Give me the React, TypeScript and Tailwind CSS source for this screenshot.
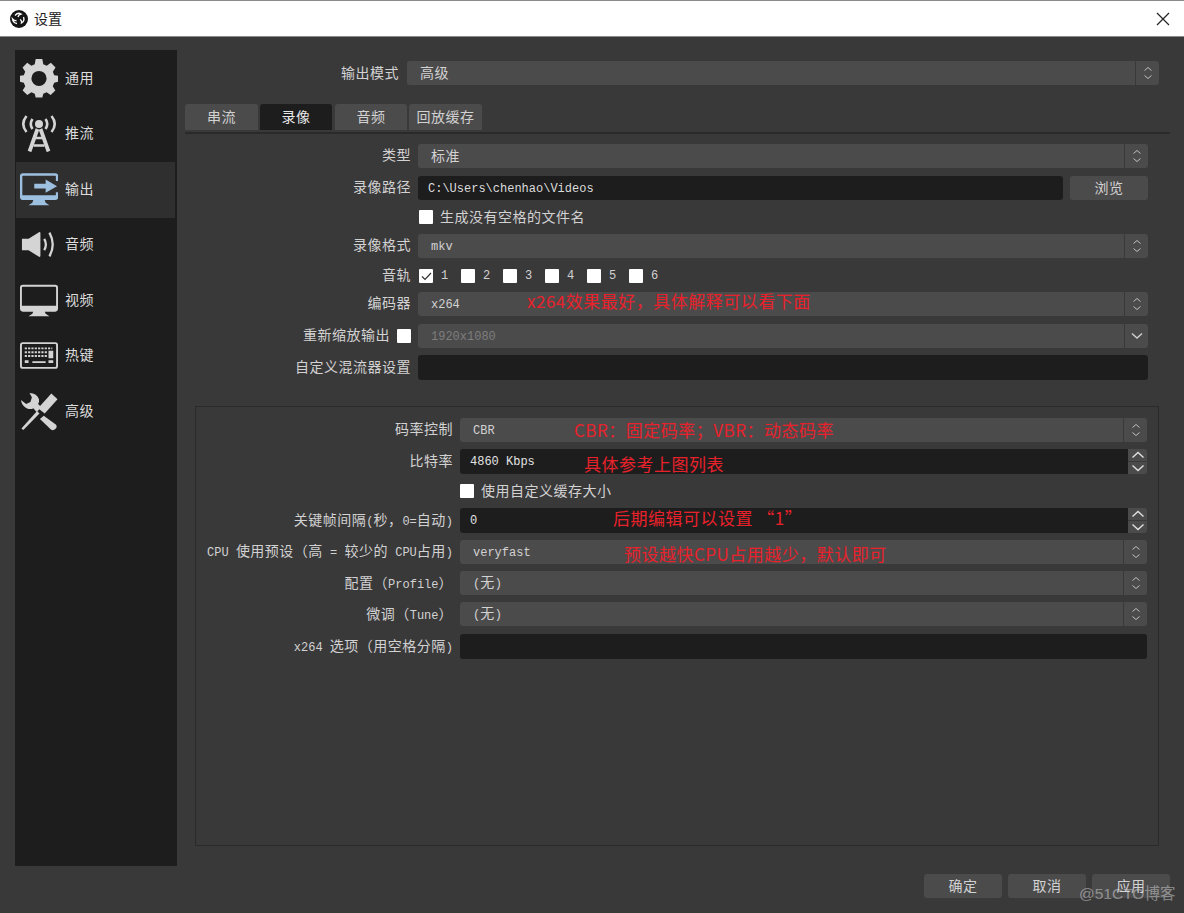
import React from "react";

const mono = "font-['Liberation_Mono',monospace] text-[12px] tracking-normal";

// latin bits of a label are monospaced and smaller than the chinese
const Mixed: React.FC<{ text: string; className?: string }> = ({ text, className }) => (
  <span className={className}>
    {text.split(/([\x20-\x7e]+)/).map((part, i) =>
      /^[\x20-\x7e]+$/.test(part) ? (
        <span key={i} className={mono + " whitespace-pre"}>
          {part}
        </span>
      ) : (
        <span key={i}>{part}</span>
      )
    )}
  </span>
);

const Chevrons: React.FC = () => (
  <svg width="10" height="16" viewBox="0 0 10 16" fill="none" stroke="#c0c0c0" strokeWidth="1">
    <path d="M1.500 5.500 5 2.500l3.500 3M1.500 10.500l3.500 3 3.500-3" />
  </svg>
);

const Select: React.FC<{ value?: string; single?: boolean; dim?: boolean }> = ({ value, single, dim }) => (
  <div className="relative flex h-[24px] flex-1 rounded-[3px] bg-[#4c4b4c]">
    <div className={"flex flex-1 items-center pb-[2px] pl-[13px] " + (dim ? "text-[#7d7d7d]" : "text-[#d2d2d2]")}>
      {value && <Mixed text={value} />}
    </div>
    <div className="ml-[1px] flex w-[24px] items-center justify-center rounded-r-[3px] border-l border-[#3a393a]">
      {single ? (
        <svg width="12" height="8" viewBox="0 0 12 8" fill="none" stroke="#d0d0d0" strokeWidth="1.400">
          <path d="M1 1.500 6 6l5-4.500" />
        </svg>
      ) : (
        <Chevrons />
      )}
    </div>
  </div>
);

const Spin: React.FC<{ value: string }> = ({ value }) => (
  <div className="flex h-[25px] flex-1 rounded-[3px] bg-[#1d1d1d]">
    <div className={"flex flex-1 items-center pl-[10px] text-[#e2e2e2] " + mono}>{value}</div>
    <div className="flex w-[19px] flex-col gap-[1px] bg-[#3a393a]">
      <div className="flex flex-1 items-center justify-center rounded-tr-[3px] bg-[#4c4b4c]">
        <svg width="14" height="8" viewBox="0 0 14 8" fill="none" stroke="#e0e0e0" strokeWidth="1.400">
          <path d="M1.500 6.500 7 1.500l5.500 5" />
        </svg>
      </div>
      <div className="flex flex-1 items-center justify-center rounded-br-[3px] bg-[#4c4b4c]">
        <svg width="14" height="8" viewBox="0 0 14 8" fill="none" stroke="#e0e0e0" strokeWidth="1.400">
          <path d="M1.500 1.500 7 6.500l5.500-5" />
        </svg>
      </div>
    </div>
  </div>
);

const Check: React.FC<{ checked?: boolean }> = ({ checked }) => (
  <div className="flex h-[14px] w-[14px] shrink-0 items-center justify-center rounded-[1px] bg-white">
    {checked && (
      <svg width="11" height="9" viewBox="0 0 11 9" fill="none" stroke="#333" strokeWidth="1.200">
        <path d="M1 4.500 4 7.500 10 1" />
      </svg>
    )}
  </div>
);

const Note: React.FC<{ left: number; top: number; text: string }> = ({ left, top, text }) => (
  <span
    className="pointer-events-none absolute whitespace-pre font-['Noto_Sans_CJK_SC',sans-serif] text-[17px] leading-[24px] tracking-[0.5px] text-[#e9212b]"
    style={{ left, top }}
  >
    {text}
  </span>
);

const Row: React.FC<{ label: React.ReactNode; labelWidth: string; children: React.ReactNode; className?: string }> = ({
  label,
  labelWidth,
  children,
  className,
}) => (
  <div className={"flex items-center gap-[7px] " + (className ?? "")}>
    <div className={"flex shrink-0 items-center justify-end whitespace-pre pb-[3px] text-[#d2d2d2] " + labelWidth}>
      {label}
    </div>
    {children}
  </div>
);

const GearIcon = () => (
  <svg width="38" height="40" viewBox="0 0 40 42" fill="#d4d4d4">
    <path
      fillRule="evenodd"
      d="M16.500 1h7l1 5.500 3.600 1.500 4.400-3 4.900 4.900-2.800 4.500L36 18l4 .5v6.500l-4 1-1.500 3.600 2.700 4.500-4.900 4.900-4.300-3-3.500 1.500-1 4h-7l-1-4-3.500-1.500-4.300 3-4.900-4.900 2.700-4.500L4 26l-4-1v-6.500l4-.5 1.500-3.600L2.700 9.900l4.900-4.900 4.400 3 3.500-1.500zM20 13.500a8 8 0 1 0 0 16 8 8 0 0 0 0-16z"
    />
  </svg>
);

const TowerIcon = () => (
  <svg width="38" height="37" viewBox="0 0 38 37" fill="none" stroke="#d4d4d4">
    <circle cx="19" cy="9" r="4" fill="#d4d4d4" stroke="none" />
    <path strokeWidth="2.600" d="M12.500 4q-3.500 5 0 10M25.500 4q3.500 5 0 10M6.500 1q-6.500 8 0 16M31.500 1q6.500 8 0 16" />
    <path strokeWidth="3.800" d="M17.500 14 9.500 36.500M20.500 14 28.500 36.500" />
    <path strokeWidth="2.600" d="M13.500 30.500h11M15.500 23h7" />
  </svg>
);

const OutputIcon = () => (
  <svg width="38" height="33" viewBox="0 0 40 34" fill="none" stroke="#9dc0e0">
    <path strokeWidth="2.500" d="M39 8V3q0-1.800-1.800-1.800H3Q1.200 1.200 1.200 3v22q0 1.800 1.800 1.800h34.200q1.800 0 1.800-1.800v-5" />
    <path fill="#9dc0e0" stroke="none" d="M1 23h38v2.500q0 2.500-2.500 2.500h-33Q1 28 1 25.500zM14 28h12l1 3 4 2.500H9l4-2.500z" />
    <path fill="#9dc0e0" stroke="none" d="M15 11h12V6.500L39 13.500 27 20.500V16H15z" />
  </svg>
);

const SpeakerIcon = () => (
  <svg width="36" height="27" viewBox="0 0 38 28" fill="#d4d4d4">
    <path d="M1 8h7L19 1q1.500-.5 1.500 1v24q0 1.500-1.500 1L8 20H1z" />
    <path fill="none" stroke="#d4d4d4" strokeWidth="2.400" d="M24.500 8q3.500 6 0 12M30 1.500q7 12.500 0 25" />
  </svg>
);

const MonitorIcon = () => (
  <svg width="38" height="33" viewBox="0 0 40 33" fill="none" stroke="#d4d4d4">
    <rect x="1" y="1" width="38" height="26" rx="2" strokeWidth="2" />
    <path fill="#d4d4d4" stroke="none" d="M1 22h38v4q0 2-2 2H3q-2 0-2-2zM14 28h12l1 2.500 4 2.500H9l4-2.500z" />
  </svg>
);

const KeyboardIcon = () => (
  <svg width="38" height="27" viewBox="0 0 40 28" fill="none">
    <rect x="1" y="1" width="38" height="26" rx="2" stroke="#d4d4d4" strokeWidth="2" />
    <path stroke="#d4d4d4" strokeWidth="2" strokeDasharray="2.300 1.200" d="M5 6.500h29M5 10.500h24M5 14.500h24" />
    <path fill="#d4d4d4" d="M30 9h5v8h-5zM5 19h4v3H5zM13 20h14v2H13zM30 19h5v3h-5z" />
  </svg>
);

const ToolsIcon = () => (
  <svg width="38" height="39" viewBox="0 0 40 40" fill="#d4d4d4">
    <path d="M33 1 39.500 7 26 22 19 16.500z" />
    <path d="M18 19.500 20.500 22 3.500 39.500 1.500 38z" />
    <path d="M25 24.500 38 34q1.500 2.500-.8 4.500t-4.700.5L21 28z" />
    <path d="M10 .5Q18 1 20 7q.5 3-1 5l3.500 3.500-5 5L14 16.500q-2 1.500-6 .5Q2 15 1 8l5.500 4L11 10l1.500-5z" />
  </svg>
);

const ObsLogo = () => (
  <svg width="18" height="18" viewBox="0 0 18 18">
    <circle cx="9" cy="9" r="9" fill="#151515" />
    <g fill="none" stroke="#fff" strokeWidth="1.300">
      <path d="M5 5.500q3-3.500 6-1.500-2.500.5-3 3" />
      <path d="M13.500 7q1.500 4-2 6 .5-2.500-1.500-3.500" />
      <path d="M7 13.500q-4-.5-4.500-4.500 1.500 2 4 1.500" />
    </g>
  </svg>
);

const navItems = [
  { label: "通用", icon: <GearIcon />, active: false },
  { label: "推流", icon: <TowerIcon />, active: false },
  { label: "输出", icon: <OutputIcon />, active: true },
  { label: "音频", icon: <SpeakerIcon />, active: false },
  { label: "视频", icon: <MonitorIcon />, active: false },
  { label: "热键", icon: <KeyboardIcon />, active: false },
  { label: "高级", icon: <ToolsIcon />, active: false },
];

const tabs = [
  { label: "串流", cls: "w-[73px] bg-[#4c4b4c]" },
  { label: "录像", cls: "w-[72px] bg-[#1d1d1d] text-[#e8e8e8]" },
  { label: "音频", cls: "ml-[1px] w-[72px] bg-[#4c4b4c]" },
  { label: "回放缓存", cls: "w-[73px] bg-[#4c4b4c]" },
];

const App: React.FC = () => {
  return (
    <div className="relative flex h-[913px] w-[1184px] flex-col overflow-hidden bg-[#3a393a] font-['Noto_Sans_CJK_SC',sans-serif] text-[14px] tracking-[0.5px] text-[#d2d2d2]">
      <div className="flex h-[37px] shrink-0 items-center border-y border-[#8a8a8a] bg-white pl-[10px] pr-[14px] text-[#222]">
        <ObsLogo />
        <span className="ml-[6px] pb-[1px] text-[14px] tracking-normal">设置</span>
        <svg className="ml-auto" width="14" height="14" viewBox="0 0 14 14" stroke="#222" strokeWidth="1.200">
          <path d="M1 1l12 12M13 1 1 13" />
        </svg>
      </div>

      <div className="flex flex-1 pl-[15px] pr-[14px] pt-[13px]">
        <div className="flex h-[816px] w-[162px] shrink-0 flex-col bg-[#1d1d1d] pl-[1px] pr-[2px] pt-[1px]">
          {navItems.map((item) => (
            <div key={item.label} className={"flex h-[55.500px] items-center " + (item.active ? "bg-[#2f2f2f]" : "")}>
              <div className="flex w-[49px] shrink-0 justify-center pb-[1px] pr-[3px]">{item.icon}</div>
              <span className="pb-[3px] text-[#dcdcdc]">{item.label}</span>
            </div>
          ))}
        </div>

        <div className="ml-[8px] flex flex-1 flex-col">
          <div className="mt-[11px] flex items-center pr-[11px]">
            <div className="flex flex-1 items-center gap-[8px]">
              <div className="w-[214px] pb-[2px] text-right">输出模式</div>
              <Select value="高级" />
            </div>
          </div>

          <div className="mt-[19px] flex gap-[2px] border-b-2 border-[#2a2a2a] pb-[2px]">
            {tabs.map((tab) => (
              <div key={tab.label} className={"flex h-[26px] items-center justify-center rounded-t-[3px] pb-[2px] " + tab.cls}>
                {tab.label}
              </div>
            ))}
          </div>

          <div className="mt-[10px] flex flex-col pr-[22px]">
            <Row label="类型" labelWidth="w-[226px]" className="h-[24px]">
              <Select value="标准" />
            </Row>
            <Row label="录像路径" labelWidth="w-[226px]" className="mt-[8px] h-[24px]">
              <div className={"flex h-[24px] flex-1 items-center rounded-[3px] bg-[#1d1d1d] pl-[10px] pt-[1px] text-[#dcdcdc] " + mono}>
                C:\Users\chenhao\Videos
              </div>
              <div className="flex h-[24px] w-[78px] items-center justify-center rounded-[3px] bg-[#4c4b4c] pb-[2px]">浏览</div>
            </Row>
            <Row label="" labelWidth="w-[226px]" className="mt-[5px] h-[24px]">
              <div className="ml-[1px]">
                <Check />
              </div>
              <span className="pb-[2px]">生成没有空格的文件名</span>
            </Row>
            <Row label="录像格式" labelWidth="w-[226px]" className="mt-[5px] h-[24px]">
              <Select value="mkv" />
            </Row>
            <Row label="音轨" labelWidth="w-[226px]" className="mt-[6px] h-[24px]">
              <div className="ml-[1px] flex">
                {["1", "2", "3", "4", "5", "6"].map((n, i) => (
                  <div key={n} className="flex w-[42px] items-center gap-[8px]">
                    <Check checked={i === 0} />
                    <span className={mono}>{n}</span>
                  </div>
                ))}
              </div>
            </Row>
            <Row label="编码器" labelWidth="w-[226px]" className="mt-[4px] h-[24px]">
              <div className="relative flex flex-1">
                <Select value="x264" />
                <Note left={109} top={-3} text="x264效果最好，具体解释可以看下面" />
              </div>
            </Row>
            <Row
              label={
                <>
                  重新缩放输出
                  <span className="ml-[7px] pt-[3px]">
                    <Check />
                  </span>
                </>
              }
              labelWidth="w-[226px]"
              className="mt-[8px] h-[24px]"
            >
              <Select value="1920x1080" single dim />
            </Row>
            <Row label="自定义混流器设置" labelWidth="w-[226px]" className="mt-[7px] h-[25px]">
              <div className="h-[25px] flex-1 rounded-[3px] bg-[#1d1d1d]" />
            </Row>
          </div>

          <div className="ml-[10px] mr-[11px] mt-[26px] flex h-[440px] flex-col border border-[#2a2a2a] pl-[10px] pr-[11px] pt-[11px]">
            <Row label="码率控制" labelWidth="w-[247px]" className="h-[24px]">
              <div className="relative flex flex-1">
                <Select value="CBR" />
                <Note left={114} top={0} text="CBR：固定码率；VBR：动态码率" />
              </div>
            </Row>
            <Row label={<Mixed text="比特率" className="pt-[1px]" />} labelWidth="w-[247px]" className="mt-[7px] h-[25px]">
              <div className="relative flex flex-1">
                <Spin value="4860 Kbps" />
                <Note left={124} top={3} text="具体参考上图列表" />
              </div>
            </Row>
            <Row label="" labelWidth="w-[247px]" className="mt-[5px] h-[24px]">
              <Check />
              <span className="pb-[2px]">使用自定义缓存大小</span>
            </Row>
            <Row label={<Mixed text="关键帧间隔(秒，0=自动)" className="pt-[1px]" />} labelWidth="w-[247px]" className="mt-[5px] h-[25px]">
              <div className="relative flex flex-1">
                <Spin value="0" />
                <Note left={153} top={-2} text="后期编辑可以设置 “1”" />
              </div>
            </Row>
            <Row label={<Mixed text="CPU 使用预设（高 = 较少的 CPU占用)" className="pt-[1px]" />} labelWidth="w-[247px]" className="mt-[7px] h-[24px]">
              <div className="relative flex flex-1">
                <Select value="veryfast" />
                <Note left={164} top={2} text="预设越快CPU占用越少，默认即可" />
              </div>
            </Row>
            <Row label={<Mixed text="配置（Profile）" className="pt-[2px]" />} labelWidth="w-[247px]" className="mt-[7px] h-[24px]">
              <Select value="(无)" />
            </Row>
            <Row label={<Mixed text="微调（Tune）" className="pt-[2px]" />} labelWidth="w-[247px]" className="mt-[7px] h-[24px]">
              <Select value="(无)" />
            </Row>
            <Row label={<Mixed text="x264 选项（用空格分隔)" className="pt-[2px]" />} labelWidth="w-[247px]" className="mt-[8px] h-[25px]">
              <div className="h-[25px] flex-1 rounded-[3px] bg-[#1d1d1d]" />
            </Row>
          </div>

          <div className="mt-[28px] flex justify-end gap-[6px]">
            <div className="flex h-[24px] w-[78px] items-center justify-center rounded-[3px] bg-[#4c4b4c] pb-[2px]">确定</div>
            <div className="flex h-[24px] w-[78px] items-center justify-center rounded-[3px] bg-[#4c4b4c] pb-[2px]">取消</div>
            <div className="flex h-[24px] w-[78px] items-center justify-center rounded-[3px] bg-[#4c4b4c] pb-[2px]">应用</div>
          </div>
        </div>
      </div>

      <span className="absolute left-[1079px] top-[882px] font-['Liberation_Sans','Noto_Sans_CJK_SC',sans-serif] text-[15.500px] tracking-normal text-white/40">
        @51CTO博客
      </span>
    </div>
  );
};

export default App;
